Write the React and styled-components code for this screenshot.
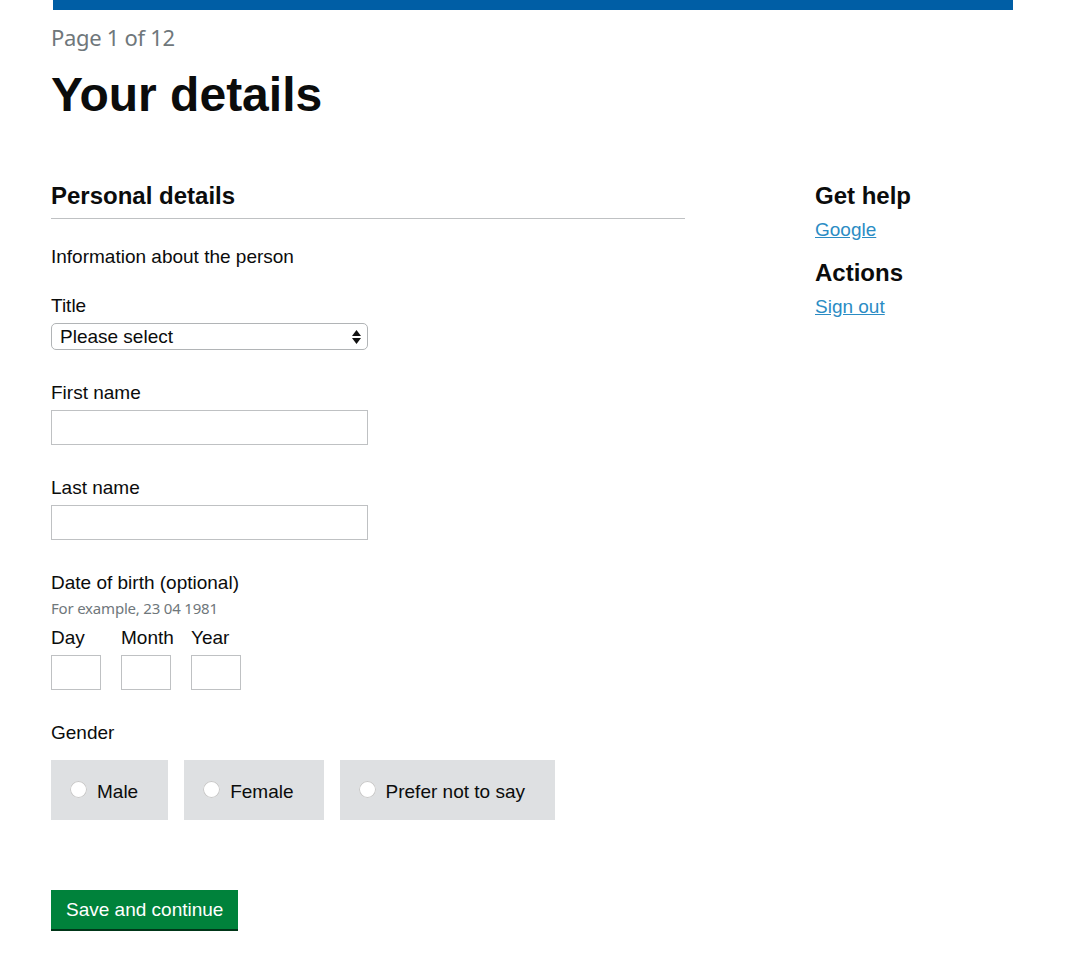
import React from 'react';
import styled, { createGlobalStyle } from 'styled-components';

const GlobalStyle = createGlobalStyle`
  body {
    margin: 0;
    background: #fff;
    font-family: "Liberation Sans", Arial, sans-serif;
    color: #0b0c0c;
  }
`;

const Page = styled.div`
  width: 962px;
  margin-left: 51px;
  padding-bottom: 30px;
`;

const TopBar = styled.div`
  height: 10px;
  margin-left: 2px;
  width: 960px;
  background: #005ea5;
`;

const Caption = styled.div`
  margin-top: 13px;
  font-family: "Noto Sans", "Open Sans", sans-serif;
  font-size: 22px;
  line-height: 28px;
  color: #6f777b;
  letter-spacing: -0.3px;
`;

const Title = styled.h1`
  margin: 17px 0 0;
  font-size: 48px;
  line-height: 54px;
  font-weight: 700;
`;

const Columns = styled.div`
  display: grid;
  grid-template-columns: 634px 1fr;
  column-gap: 130px;
  margin-top: 59px;
`;

const Main = styled.main`
  display: flex;
  flex-direction: column;
`;

const SectionHeading = styled.h2`
  margin: 0;
  padding-bottom: 7px;
  font-size: 24px;
  line-height: 30px;
  font-weight: 700;
  border-bottom: 1px solid #bfc1c3;
`;

const Lead = styled.p`
  margin: 25px 0 0;
  font-size: 19px;
  line-height: 25px;
`;

const Field = styled.div`
  display: flex;
  flex-direction: column;
  margin-top: ${p => p.$gap || 30}px;
`;

const Label = styled.label`
  font-size: 19px;
  line-height: 25px;
  margin-bottom: ${p => p.$mb ?? 5}px;
`;

const Hint = styled.span`
  font-family: "Noto Sans", "Open Sans", sans-serif;
  font-size: 15px;
  line-height: 20px;
  color: #6f777b;
  margin-top: 3px;
  letter-spacing: -0.2px;
`;

const Select = styled.div`
  position: relative;
  box-sizing: border-box;
  width: 317px;
  height: 27px;
  border: 1px solid #b1b4b6;
  border-radius: 5px;
  padding: 0 0 0 8px;
  font-size: 19px;
  line-height: 25px;
  display: flex;
  align-items: center;
  background: #fff;
`;

const Arrows = styled.span`
  position: absolute;
  right: 6px;
  top: 6px;
  display: flex;
  flex-direction: column;
  gap: 2px;
`;

const TextInput = styled.div`
  box-sizing: border-box;
  width: ${p => p.$w || 317}px;
  height: 35px;
  border: 1px solid #bfc1c3;
  background: #fff;
`;

const DateRow = styled.div`
  display: flex;
  gap: 20px;
  margin-top: 7px;
`;

const DatePart = styled.div`
  display: flex;
  flex-direction: column;
  width: 50px;
`;

const RadioRow = styled.div`
  display: flex;
  gap: 16px;
  margin-top: 15px;
`;

const RadioBlock = styled.div`
  box-sizing: border-box;
  display: flex;
  align-items: center;
  height: 60px;
  background: #dee0e2;
  padding: 4px 30px 0 19px;
  font-size: 19px;
  gap: 10px;
`;

const RadioDot = styled.span`
  width: 17px;
  height: 17px;
  border-radius: 50%;
  background: #fff;
  box-shadow: inset 0 0 0 1px #c8c8c8;
  margin-top: -5px;
`;

const Button = styled.button`
  align-self: flex-start;
  margin-top: 70px;
  height: 39px;
  padding: 0 15px;
  border: none;
  background: #00823b;
  box-shadow: 0 2px 0 #003618;
  color: #fff;
  font-family: "Liberation Sans", Arial, sans-serif;
  font-size: 19px;
  line-height: 38px;
`;

const Aside = styled.aside`
  display: flex;
  flex-direction: column;
`;

const SideHeading = styled.h3`
  margin: ${p => p.$mt || 0}px 0 6px;
  font-size: 24px;
  line-height: 30px;
  font-weight: 700;
`;

const SideLink = styled.a`
  font-size: 19px;
  line-height: 25px;
  color: #2b8cc4;
  text-decoration: underline;
`;

function SelectArrows() {
  return (
    <Arrows>
      <svg width="9" height="6" viewBox="0 0 9 6"><path d="M4.5 0 L9 6 L0 6 Z" fill="#111" /></svg>
      <svg width="9" height="6" viewBox="0 0 9 6"><path d="M0 0 L9 0 L4.5 6 Z" fill="#111" /></svg>
    </Arrows>
  );
}

export default function App() {
  return (
    <>
      <GlobalStyle />
      <Page>
        <TopBar />
        <Caption>Page 1 of 12</Caption>
        <Title>Your details</Title>
        <Columns>
          <Main>
            <SectionHeading>Personal details</SectionHeading>
            <Lead>Information about the person</Lead>

            <Field $gap={24}>
              <Label>Title</Label>
              <Select>
                Please select
                <SelectArrows />
              </Select>
            </Field>

            <Field $gap={30}>
              <Label>First name</Label>
              <TextInput />
            </Field>

            <Field $gap={30}>
              <Label>Last name</Label>
              <TextInput />
            </Field>

            <Field $gap={30}>
              <Label $mb={0}>Date of birth (optional)</Label>
              <Hint>For example, 23 04 1981</Hint>
              <DateRow>
                <DatePart>
                  <Label>Day</Label>
                  <TextInput $w={50} />
                </DatePart>
                <DatePart>
                  <Label>Month</Label>
                  <TextInput $w={50} />
                </DatePart>
                <DatePart>
                  <Label>Year</Label>
                  <TextInput $w={50} />
                </DatePart>
              </DateRow>
            </Field>

            <Field $gap={30}>
              <Label $mb={0}>Gender</Label>
              <RadioRow>
                <RadioBlock><RadioDot />Male</RadioBlock>
                <RadioBlock><RadioDot />Female</RadioBlock>
                <RadioBlock><RadioDot />Prefer not to say</RadioBlock>
              </RadioRow>
            </Field>

            <Button>Save and continue</Button>
          </Main>
          <Aside>
            <SideHeading>Get help</SideHeading>
            <SideLink href="#">Google</SideLink>
            <SideHeading $mt={16}>Actions</SideHeading>
            <SideLink href="#">Sign out</SideLink>
          </Aside>
        </Columns>
      </Page>
    </>
  );
}
